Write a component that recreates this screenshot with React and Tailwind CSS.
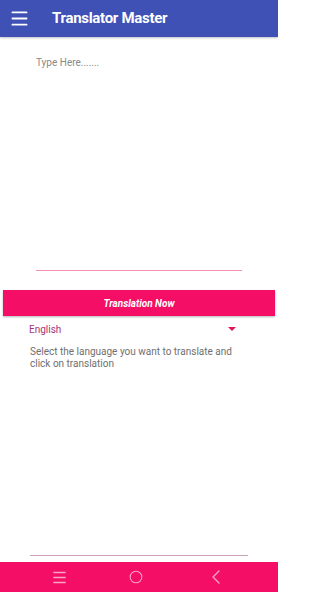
import { ChevronLeft, Circle, Menu } from 'lucide-react'

export default function App() {
  return (
    <div className="w-[278px] h-[592px] flex flex-col bg-white font-['Roboto',sans-serif] overflow-hidden">
      <header className="h-[37px] shrink-0 bg-[#3f51b5] flex items-center shadow-[0_1px_2px_rgba(0,0,0,0.25)]">
        <Menu className="ml-[9px] w-[21px] h-[21px] text-white" strokeWidth={2.2} />
        <h1 className="ml-[22px] text-white font-bold text-[15px] tracking-[-0.3px]">Translator Master</h1>
      </header>

      <div className="px-[36px] pt-[18px]">
        <textarea
          placeholder="Type Here......."
          className="block w-full h-[216px] resize-none outline-none text-[10px] text-gray-700 placeholder:text-[#8a8a8a] border-b border-[#f48fb1] bg-transparent"
        />
      </div>

      <div className="px-[3px] mt-[19px]">
        <button className="block w-full h-[26px] bg-[#f50e65] text-white text-[10px] font-bold italic shadow-[0_1px_2px_rgba(0,0,0,0.3)]">
          Translation Now
        </button>
      </div>

      <div className="mt-[5px] pl-[29px] pr-[42px] flex items-center justify-between h-[16px]">
        <span className="text-[10px] text-[#a3347a]">English</span>
        <span className="w-0 h-0 border-l-[4px] border-r-[4px] border-t-[4px] border-l-transparent border-r-transparent border-t-[#e0145c]" />
      </div>

      <p className="mt-[9px] px-[30px] text-[10px] leading-[11.5px] text-[#6f6f6f]">
        Select the language you want to translate and click on translation
      </p>

      <div className="flex-1 px-[30px] flex flex-col justify-end">
        <div className="border-b border-[#c9a0b6] mb-[6px]" />
      </div>

      <nav className="h-[30px] shrink-0 bg-[#f50e65] flex items-center justify-around px-[20px]">
        <Menu className="w-[17px] h-[17px] text-[#f7a6c6]" strokeWidth={2} />
        <Circle className="w-[14px] h-[14px] text-[#f7a6c6]" strokeWidth={1.8} />
        <ChevronLeft className="w-[24px] h-[24px] text-[#f7a6c6]" strokeWidth={1.4} />
      </nav>
    </div>
  )
}
